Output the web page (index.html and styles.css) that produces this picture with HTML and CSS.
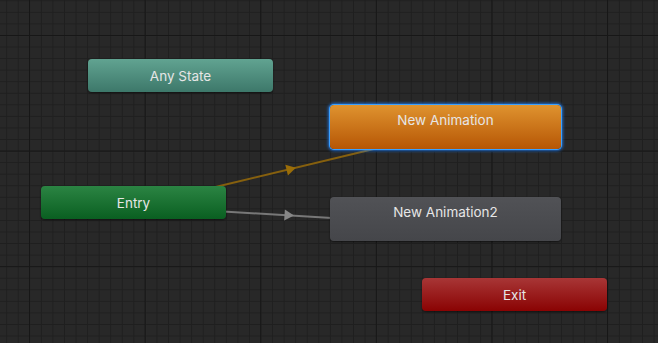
FILE: index.html
```html
<!DOCTYPE html>
<html>
<head>
<meta charset="utf-8">
<link rel="stylesheet" href="styles.css">
</head>
<body>
<div class="canvas">
  <svg class="grid" width="658" height="343" xmlns="http://www.w3.org/2000/svg">
    <defs>
      <pattern id="minor" patternUnits="userSpaceOnUse" width="11.56" height="11.56" x="6.2" y="0.3">
        <rect x="0" y="0" width="1" height="11.56" fill="#1f1f1f"/>
        <rect x="0" y="0" width="11.56" height="1" fill="#1f1f1f"/>
      </pattern>
      <pattern id="major" patternUnits="userSpaceOnUse" width="115.6" height="115.6" x="29" y="35">
        <rect x="0" y="0" width="1" height="115.6" fill="#171717"/>
        <rect x="0" y="0" width="115.6" height="1" fill="#171717"/>
      </pattern>
    </defs>
    <rect width="658" height="343" fill="#282828"/>
    <rect width="658" height="343" fill="url(#minor)" shape-rendering="crispEdges"/>
    <rect width="658" height="343" fill="url(#major)" shape-rendering="crispEdges"/>
    <line x1="205" y1="189.5" x2="380" y2="147.5" stroke="#86600e" stroke-width="2"/>
    <polygon points="-4.5,-5.5 5,0 -4.5,5.5" fill="#9a6d08" transform="translate(291 169) rotate(-13.5)"/>
    <line x1="215" y1="211" x2="340" y2="218.6" stroke="#787878" stroke-width="2"/>
    <polygon points="-4.5,-5.5 5,0 -4.5,5.5" fill="#878787" transform="translate(289 215.2) rotate(3.6)"/>
  </svg>

  <div class="node node-any">Any State</div>
  <div class="node node-state node-default">New Animation</div>
  <div class="node node-entry">Entry</div>
  <div class="node node-state node-plain">New Animation2</div>
  <div class="node node-exit">Exit</div>
</div>
</body>
</html>
```
FILE: styles.css
```css
html, body {
  margin: 0;
  padding: 0;
  background: #282828;
}
.canvas {
  position: relative;
  width: 658px;
  height: 343px;
  overflow: hidden;
  font-family: Inter, "Noto Sans", sans-serif;
}
.grid {
  position: absolute;
  left: 0;
  top: 0;
  display: block;
}
.node {
  position: absolute;
  box-sizing: border-box;
  border-radius: 4px;
  color: #e6e6e6;
  font-size: 13.5px;
  display: flex;
  align-items: center;
  justify-content: center;
  box-shadow: 0 1px 2px rgba(0, 0, 0, 0.55);
}
.node-state {
  align-items: flex-start;
  padding-top: 7px;
  width: 231px;
  height: 44px;
}
.node-any {
  left: 88px;
  top: 59px;
  width: 185px;
  height: 33px;
  background: linear-gradient(#61a391, #3d786a);
}
.node-default {
  left: 330px;
  top: 105px;
  background: linear-gradient(#df932f, #b65605);
  box-shadow: 0 0 0 1px #3aa0ff, 0 0 3px 2px rgba(30, 130, 255, 0.75);
}
.node-entry {
  left: 41px;
  top: 186px;
  width: 185px;
  height: 33px;
  background: linear-gradient(#2b8443, #0a5f21);
}
.node-plain {
  left: 330px;
  top: 197px;
  background: linear-gradient(#515256, #45464a);
}
.node-exit {
  left: 422px;
  top: 278px;
  width: 185px;
  height: 33px;
  background: linear-gradient(#a83636, #8a0303);
}
```
